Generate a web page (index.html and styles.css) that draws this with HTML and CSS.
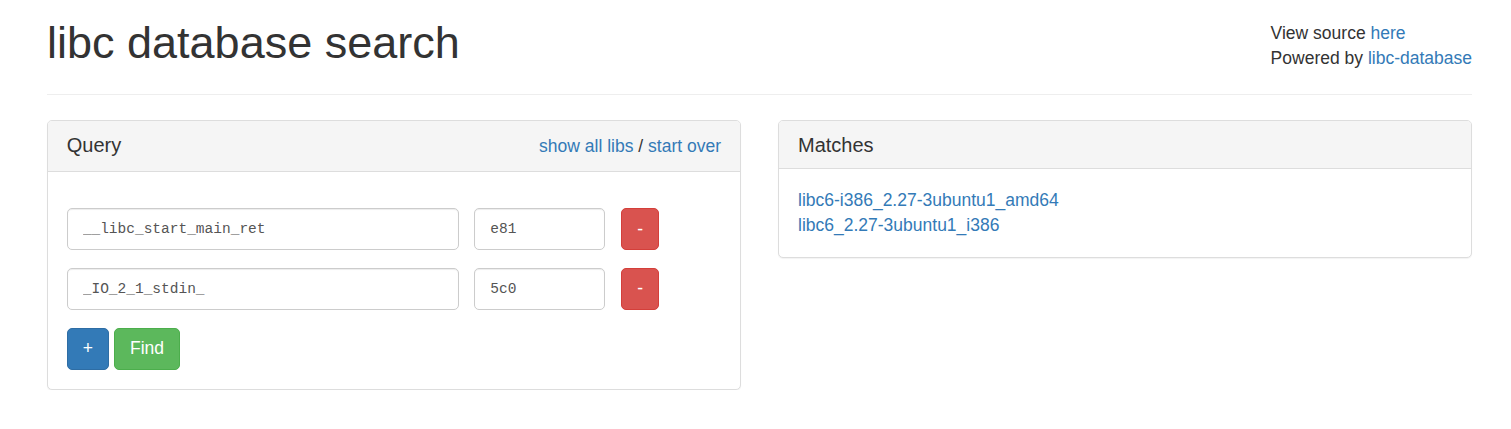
FILE: index.html
```html
<!DOCTYPE html>
<html lang="en">
<head>
<meta charset="utf-8">
<title>libc database search</title>
<link rel="stylesheet" href="styles.css">
</head>
<body>
<div class="container">
  <div class="header">
    <h1 class="title">libc database search</h1>
    <div class="credits">
      <div>View source <a href="#">here</a></div>
      <div>Powered by <a href="#">libc-database</a></div>
    </div>
  </div>
  <hr class="divider">
  <div class="columns">
    <div class="panel">
      <div class="panel-heading query-heading">
        <h3 class="panel-title">Query</h3>
        <div class="heading-links"><a href="#">show all libs</a> / <a href="#">start over</a></div>
      </div>
      <div class="panel-body">
        <div class="query-row">
          <input class="field field-symbol" type="text" value="__libc_start_main_ret">
          <input class="field field-addr" type="text" value="e81">
          <button class="btn btn-danger" type="button">-</button>
        </div>
        <div class="query-row">
          <input class="field field-symbol" type="text" value="_IO_2_1_stdin_">
          <input class="field field-addr" type="text" value="5c0">
          <button class="btn btn-danger" type="button">-</button>
        </div>
        <div class="action-row">
          <button class="btn btn-primary" type="button">+</button>
          <button class="btn btn-success" type="button">Find</button>
        </div>
      </div>
    </div>
    <div class="panel">
      <div class="panel-heading">
        <h3 class="panel-title">Matches</h3>
      </div>
      <div class="panel-body">
        <a class="match" href="#">libc6-i386_2.27-3ubuntu1_amd64</a>
        <a class="match" href="#">libc6_2.27-3ubuntu1_i386</a>
      </div>
    </div>
  </div>
</div>
</body>
</html>
```

FILE: styles.css
```css
* {
  box-sizing: border-box;
}

html, body {
  margin: 0;
  padding: 0;
  background: #fff;
}

body {
  font-family: "Liberation Sans", Arial, Helvetica, sans-serif;
  font-size: 17.5px;
  line-height: 25px;
  color: #333;
}

a {
  color: #337ab7;
  text-decoration: none;
}

.container {
  width: 1425px;
  margin-left: 47px;
}

.header {
  display: flex;
  justify-content: space-between;
  align-items: flex-start;
  height: 71px;
}

.title {
  margin: 18px 0 0;
  font-size: 45px;
  line-height: 49.5px;
  font-weight: 500;
  color: #333;
}

.credits {
  margin-top: 21px;
  font-size: 17.5px;
  line-height: 25px;
}

.divider {
  height: 0;
  border: 0;
  border-top: 1px solid #eee;
  margin: 23px 0 25px;
}

.columns {
  display: grid;
  grid-template-columns: 1fr 1fr;
  column-gap: 37.5px;
  align-items: start;
}

.panel {
  background: #fff;
  border: 1px solid #ddd;
  border-radius: 5px;
  box-shadow: 0 1px 1px rgba(0, 0, 0, 0.05);
}

.panel-heading {
  background: #f5f5f5;
  border-bottom: 1px solid #ddd;
  border-radius: 4px 4px 0 0;
  padding: 12.5px 18.75px;
}

.query-heading {
  display: flex;
  justify-content: space-between;
  align-items: flex-start;
}

.panel-title {
  margin: 0;
  font-size: 20px;
  line-height: 22px;
  font-weight: 500;
  color: #333;
}

.heading-links {
  font-size: 17.5px;
  line-height: 25px;
}

.panel-body {
  padding: 18.75px;
}

.query-row {
  display: flex;
  align-items: center;
  margin-top: 17.5px;
}

.field {
  display: block;
  height: 42px;
  padding: 0 15px;
  font-family: "Liberation Mono", "DejaVu Sans Mono", monospace;
  font-size: 14.5px;
  line-height: 40px;
  color: #555;
  background: #fff;
  border: 1px solid #ccc;
  border-radius: 5px;
  box-shadow: inset 0 1px 1px rgba(0, 0, 0, 0.075);
  outline: none;
}

.field-symbol {
  width: 392.5px;
  margin-right: 15px;
}

.field-addr {
  width: 131px;
  margin-right: 16px;
}

.action-row {
  display: flex;
  gap: 5px;
  margin-top: 18px;
}

.btn {
  display: inline-block;
  padding: 7.5px 15px;
  font-family: "Liberation Sans", Arial, Helvetica, sans-serif;
  font-size: 17.5px;
  line-height: 25px;
  color: #fff;
  border: 1px solid transparent;
  border-radius: 5px;
  cursor: pointer;
}

.btn-danger {
  background: #d9534f;
  border-color: #d43f3a;
}

.btn-primary {
  background: #337ab7;
  border-color: #2e6da4;
}

.btn-success {
  background: #5cb85c;
  border-color: #4cae4c;
}

.match {
  display: block;
  line-height: 25px;
}
```
